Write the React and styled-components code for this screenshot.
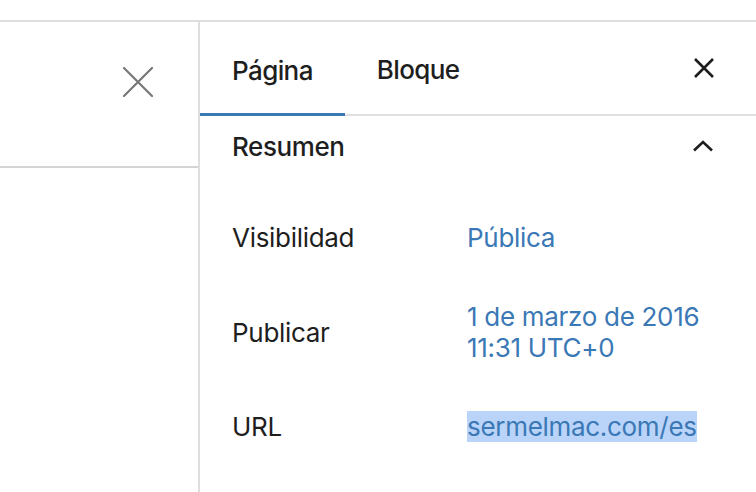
import React from 'react';
import styled, { createGlobalStyle } from 'styled-components';

const GlobalStyle = createGlobalStyle`
  html, body {
    margin: 0;
    padding: 0;
    background: #fff;
  }
  body {
    font-family: Inter, "Noto Sans", sans-serif;
    color: #1e1e1e;
    -webkit-font-smoothing: antialiased;
  }
`;

const Screen = styled.div`
  width: 756px;
  height: 492px;
  overflow: hidden;
  display: flex;
  flex-direction: column;
`;

const TopStrip = styled.div`
  height: 20px;
  flex: none;
  border-bottom: 2px solid #dedede;
`;

const Columns = styled.div`
  flex: 1;
  display: flex;
  min-height: 0;
`;

const LeftPanel = styled.div`
  width: 198px;
  flex: none;
  border-right: 2px solid #dedede;
`;

const LeftHeader = styled.div`
  height: 146px;
  border-bottom: 2px solid #d4d4d4;
  display: flex;
  align-items: flex-start;
  justify-content: flex-end;
  padding: 45px 45px 0 0;
  box-sizing: border-box;
`;

const Sidebar = styled.div`
  flex: 1;
  display: flex;
  flex-direction: column;
`;

const TabBar = styled.div`
  height: 92px;
  flex: none;
  display: flex;
  align-items: stretch;
  border-bottom: 2px solid #e0e0e0;
  padding-right: 42px;
`;

const Tab = styled.div`
  padding: 0 32px;
  display: flex;
  align-items: center;
  font-size: 26px;
  font-weight: 500;
  letter-spacing: -0.6px;
  padding-top: 2px;
  box-shadow: ${p => (p.$active ? 'inset 0 -3px 0 #3a78b6' : 'none')};
  margin-bottom: ${p => (p.$active ? '-2px' : '0')};
`;

const Spacer = styled.div`
  flex: 1;
`;

const IconButton = styled.div`
  display: flex;
  align-items: center;
  justify-content: center;
`;

const Body = styled.div`
  padding: 0 42px 0 32px;
`;

const SectionHeader = styled.div`
  height: 60px;
  display: flex;
  align-items: center;
  justify-content: space-between;
  font-size: 26px;
  font-weight: 500;
  letter-spacing: -0.4px;
`;

const Rows = styled.div`
  display: flex;
  flex-direction: column;
  gap: 48px;
  padding-top: 46px;
`;

const Row = styled.div`
  display: grid;
  grid-template-columns: 235px 1fr;
  align-items: center;
  font-size: 26px;
  line-height: 31px;
  letter-spacing: -0.3px;
`;

const Label = styled.div`
  color: #1e1e1e;
`;

const Value = styled.div`
  color: #3a78b6;
`;

const Selected = styled.span`
  background: #b9d4f8;
`;

const CloseIcon = ({ size, color, stroke, cap }) => (
  <svg width={size} height={size} viewBox={`0 0 ${size} ${size}`}>
    <path
      d={`M1 1 L${size - 1} ${size - 1} M${size - 1} 1 L1 ${size - 1}`}
      stroke={color}
      strokeWidth={stroke}
      strokeLinecap={cap}
      fill="none"
    />
  </svg>
);

const ChevronUp = () => (
  <svg width="22" height="14" viewBox="0 0 22 14">
    <path d="M2 11.5 L11 3 L20 11.5" stroke="#1e1e1e" strokeWidth="2.6" fill="none" />
  </svg>
);

export default function App() {
  return (
    <Screen>
      <GlobalStyle />
      <TopStrip />
      <Columns>
        <LeftPanel>
          <LeftHeader>
            <CloseIcon size={30} color="#767676" stroke={2.2} cap="round" />
          </LeftHeader>
        </LeftPanel>
        <Sidebar>
          <TabBar>
            <Tab $active>Página</Tab>
            <Tab>Bloque</Tab>
            <Spacer />
            <IconButton>
              <CloseIcon size={20} color="#1e1e1e" stroke={2.6} cap="butt" />
            </IconButton>
          </TabBar>
          <Body>
            <SectionHeader>
              <span>Resumen</span>
              <ChevronUp />
            </SectionHeader>
            <Rows>
              <Row>
                <Label>Visibilidad</Label>
                <Value>Pública</Value>
              </Row>
              <Row>
                <Label>Publicar</Label>
                <Value>1 de marzo de 2016<br />11:31 UTC+0</Value>
              </Row>
              <Row>
                <Label>URL</Label>
                <Value><Selected>sermelmac.com/es</Selected></Value>
              </Row>
            </Rows>
          </Body>
        </Sidebar>
      </Columns>
    </Screen>
  );
}
